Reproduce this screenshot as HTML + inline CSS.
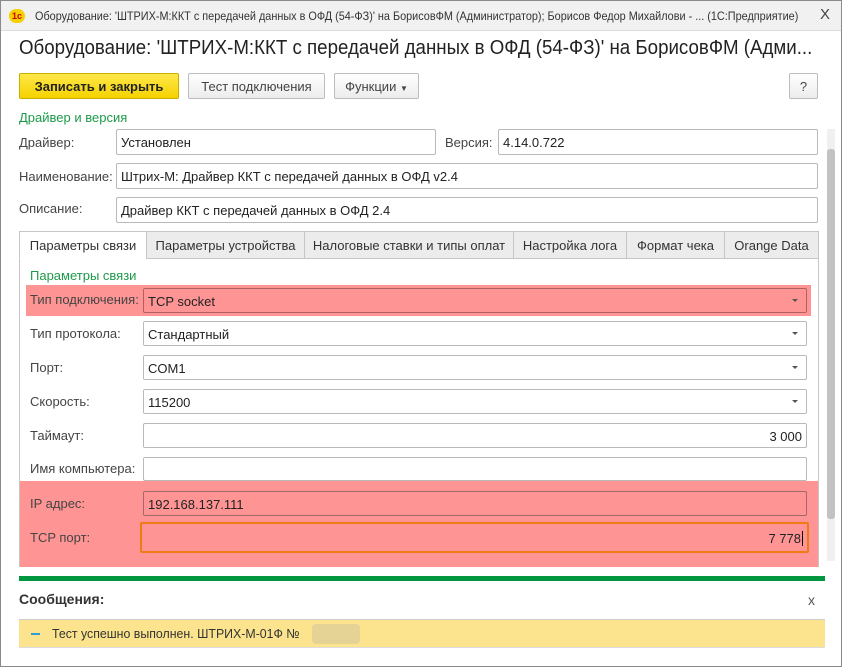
<!DOCTYPE html>
<html><head><meta charset="utf-8"><style>
*{box-sizing:border-box;margin:0;padding:0}
body{width:842px;height:667px;background:#c9c9c9;font-family:"Liberation Sans",Arial,sans-serif;position:relative;overflow:hidden;color:#333}
.a{position:absolute;white-space:nowrap}
.win{position:absolute;left:0;top:0;width:842px;height:667px;border:1px solid #8a8a8a;background:#fff}
.title{position:absolute;left:0;top:0;width:840px;height:30px;background:#f1f1f1;border-bottom:1px solid #ddd}
.in{position:absolute;background:#fff;border:1px solid #b9b9b9;border-radius:2px;font-size:13px;padding:5px 4px 0 4px;color:#222;white-space:nowrap}
.lbl{position:absolute;font-size:13px;color:#444;white-space:nowrap}
.dd{position:absolute;right:0;top:0;width:22px;height:100%}
.dd:after{content:"";position:absolute;left:8px;top:10px;border-left:3px solid transparent;border-right:3px solid transparent;border-top:3px solid #555}
.tab{position:absolute;top:230px;height:28px;background:#ececec;border:1px solid #c6c6c6;font-size:13px;color:#333;text-align:center;padding-top:6px}
.btn{position:absolute;top:72px;height:26px;border:1px solid #bdbdbd;border-radius:2px;background:linear-gradient(#fff,#ececec);font-size:13px;color:#444;text-align:center;padding-top:5px}
</style></head><body>
<div class="win">
<div class="title">
 <div class="a" style="left:8px;top:8px;width:16px;height:14px;background:#f5d000;border-radius:7px;font-size:9px;color:#c00;font-weight:bold;text-align:center;line-height:14px">1c</div>
 <div class="a" style="left:34px;top:8px;font-size:12px;color:#333;transform:scaleX(0.905);transform-origin:left">Оборудование: 'ШТРИХ-М:ККТ с передачей данных в ОФД (54-ФЗ)' на БорисовФМ (Администратор); Борисов Федор Михайлови - ... (1С:Предприятие)</div>
 <div class="a" style="left:819px;top:5px;font-size:15px;color:#444">X</div>
</div>
<div class="a" style="left:18px;top:36px;font-size:20px;color:#222;transform:scaleX(0.935);transform-origin:left">Оборудование: 'ШТРИХ-М:ККТ с передачей данных в ОФД (54-ФЗ)' на БорисовФМ (Адми...</div>
<div class="btn" style="left:18px;width:160px;background:linear-gradient(#ffe84a,#f5d200);border-color:#c9ae00;color:#222;font-weight:bold">Записать и закрыть</div>
<div class="btn" style="left:187px;width:137px">Тест подключения</div>
<div class="btn" style="left:333px;width:85px">Функции <span style="font-size:8px">▼</span></div>
<div class="btn" style="left:788px;width:29px">?</div>
<div class="a" style="left:18px;top:109px;font-size:13px;color:#1c9a4a">Драйвер и версия</div>
<div class="a" style="left:826px;top:128px;width:8px;height:432px;background:#f0f0f0"></div>
<div class="a" style="left:826px;top:148px;width:8px;height:370px;background:#c2c2c2;border-radius:3px"></div>
<div class="lbl" style="left:18px;top:134px">Драйвер:</div>
<div class="in" style="left:115px;top:128px;width:320px;height:26px">Установлен</div>
<div class="lbl" style="left:444px;top:134px">Версия:</div>
<div class="in" style="left:497px;top:128px;width:320px;height:26px">4.14.0.722</div>
<div class="lbl" style="left:18px;top:168px">Наименование:</div>
<div class="in" style="left:115px;top:162px;width:702px;height:26px">Штрих-М: Драйвер ККТ с передачей данных в ОФД v2.4</div>
<div class="lbl" style="left:18px;top:200px">Описание:</div>
<div class="in" style="left:115px;top:196px;width:702px;height:26px">Драйвер ККТ с передачей данных в ОФД 2.4</div>
<div class="a" style="left:18px;top:257px;width:800px;height:309px;border:1px solid #c6c6c6"></div>
<div class="tab" style="left:18px;width:128px;background:#fff;border-bottom-color:#fff">Параметры связи</div>
<div class="tab" style="left:145px;width:159px">Параметры устройства</div>
<div class="tab" style="left:303px;width:210px">Налоговые ставки и типы оплат</div>
<div class="tab" style="left:512px;width:114px">Настройка лога</div>
<div class="tab" style="left:625px;width:99px">Формат чека</div>
<div class="tab" style="left:723px;width:95px">Orange Data</div>
<div class="a" style="left:29px;top:267px;font-size:13px;color:#1c9a4a">Параметры связи</div>
<div class="a" style="left:25px;top:284px;width:785px;height:31px;background:#ff9494"></div>
<div class="lbl" style="left:29px;top:291px">Тип подключения:</div>
<div class="in" style="left:142px;top:287px;width:664px;height:25px;background:#ff9494;border-color:#b06060">TCP socket<div class="dd"></div></div>
<div class="lbl" style="left:29px;top:325px">Тип протокола:</div>
<div class="in" style="left:142px;top:320px;width:664px;height:25px">Стандартный<div class="dd"></div></div>
<div class="lbl" style="left:29px;top:359px">Порт:</div>
<div class="in" style="left:142px;top:354px;width:664px;height:25px">COM1<div class="dd"></div></div>
<div class="lbl" style="left:29px;top:393px">Скорость:</div>
<div class="in" style="left:142px;top:388px;width:664px;height:25px">115200<div class="dd"></div></div>
<div class="lbl" style="left:29px;top:427px">Таймаут:</div>
<div class="in" style="left:142px;top:422px;width:664px;height:25px;text-align:right">3 000</div>
<div class="lbl" style="left:29px;top:460px">Имя компьютера:</div>
<div class="in" style="left:142px;top:456px;width:664px;height:24px"></div>
<div class="a" style="left:19px;top:480px;width:798px;height:86px;background:#ff9494"></div>
<div class="lbl" style="left:29px;top:495px">IP адрес:</div>
<div class="in" style="left:142px;top:490px;width:664px;height:25px;background:#ff9494;border-color:#a06868">192.168.137.111</div>
<div class="lbl" style="left:29px;top:529px">TCP порт:</div>
<div class="in" style="left:139px;top:521px;width:669px;height:31px;background:#ff9494;border:2px solid #f07a14;text-align:right;padding-top:7px">7 778<span style="border-left:1px solid #000;margin-left:1px"></span></div>
<div class="a" style="left:18px;top:575px;width:806px;height:5px;background:#00953f"></div>
<div class="a" style="left:18px;top:590px;font-size:14px;font-weight:bold;color:#333">Сообщения:</div>
<div class="a" style="left:807px;top:591px;font-size:14px;color:#555">x</div>
<div class="a" style="left:18px;top:618px;width:806px;height:29px;background:#fce48e;border-top:1px solid #ccc;border-bottom:1px solid #ddd"></div>
<div class="a" style="left:30px;top:632px;width:9px;height:2px;background:#2b9fd8"></div>
<div class="a" style="left:51px;top:625px;font-size:13px;color:#333;transform:scaleX(0.95);transform-origin:left">Тест успешно выполнен. ШТРИХ-М-01Ф №</div>
<div class="a" style="left:311px;top:623px;width:48px;height:20px;background:#e4d394;border-radius:4px"></div>
</div>
</body></html>
